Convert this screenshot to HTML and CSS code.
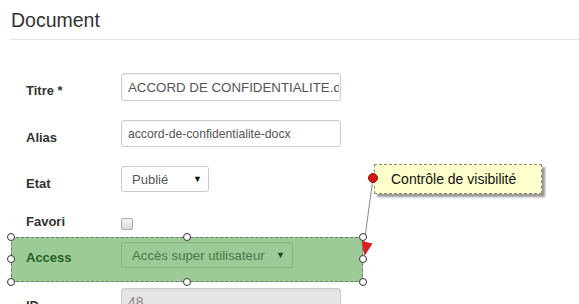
FILE: index.html
```html
<!DOCTYPE html>
<html lang="fr">
<head>
<meta charset="utf-8">
<title>Document</title>
<link rel="stylesheet" href="styles.css">
</head>
<body>
<header class="page-header"><h2>Document</h2></header>
<form class="form">
  <div class="row r-titre">
    <label class="label">Titre *</label>
    <input class="input" type="text" value="ACCORD DE CONFIDENTIALITE.docx">
  </div>
  <div class="row r-alias">
    <label class="label">Alias</label>
    <input class="input" type="text" value="accord-de-confidentialite-docx">
  </div>
  <div class="row r-etat">
    <label class="label">Etat</label>
    <div class="select select-etat"><span>Publié</span><span class="caret">▼</span></div>
  </div>
  <div class="row r-favori">
    <label class="label">Favori</label>
    <span class="checkbox"></span>
  </div>
  <div class="row r-access">
    <label class="label">Access</label>
    <div class="select select-access"><span>Accès super utilisateur</span><span class="caret">▼</span></div>
    <span class="handle h-tl"></span><span class="handle h-tm"></span><span class="handle h-tr"></span>
    <span class="handle h-ml"></span><span class="handle h-mr"></span>
    <span class="handle h-bl"></span><span class="handle h-bm"></span><span class="handle h-br"></span>
  </div>
  <div class="row r-id">
    <label class="label">ID</label>
    <input class="input input-ro" type="text" value="48" readonly>
  </div>
</form>
<div class="tooltip">Contrôle de visibilité</div>
<svg class="connector" width="579" height="304" viewBox="0 0 579 304">
  <line x1="373" y1="178" x2="363" y2="252" stroke="#8a8a8a" stroke-width="1"/>
  <polygon points="361.5,241 372.5,243.5 364.5,256" fill="#d91e1e"/>
  <circle cx="373" cy="178" r="4.5" fill="#d01515" stroke="#a50e0e" stroke-width="1"/>
</svg>
</body>
</html>
```
FILE: styles.css
```css
html, body {
  margin: 0;
  padding: 0;
  background: #fff;
}
body {
  position: relative;
  width: 579px;
  height: 304px;
  overflow: hidden;
  font-family: "Liberation Sans", Arial, sans-serif;
  color: #333;
}
.page-header {
  margin: 0 0 0 10px;
  padding: 9px 0 8px 1px;
  border-bottom: 1px solid #e5e5e5;
}
.page-header h2 {
  margin: 0;
  font-size: 19.5px;
  line-height: 22px;
  font-weight: normal;
  color: #333;
}
.form {
  margin: 0;
  padding-top: 33px;
}
.row {
  display: flex;
  align-items: flex-start;
  margin-left: 11px;
  padding-left: 15px;
  width: 352px;
  box-sizing: border-box;
}
.label {
  width: 95px;
  flex: none;
  font-size: 13px;
  line-height: 18px;
  font-weight: bold;
  padding-top: 9px;
  color: #333;
}
.input {
  box-sizing: border-box;
  width: 220px;
  height: 28px;
  margin: 0;
  padding: 0 1px 0 6px;
  border: 1px solid #ccc;
  border-radius: 3px;
  font-family: "Liberation Sans", Arial, sans-serif;
  font-size: 13px;
  color: #555;
  background: #fff;
  box-shadow: inset 0 1px 1px rgba(0,0,0,0.05);
  outline: none;
}
.r-titre .input { font-size: 13.3px; }
.r-alias { margin-top: 19px; }
.r-alias .input { height: 27px; font-size: 12.2px; }
.r-etat { margin-top: 19px; }
.select {
  box-sizing: border-box;
  display: flex;
  align-items: center;
  justify-content: space-between;
  height: 26px;
  border-radius: 3px;
  font-size: 13px;
}
.caret {
  font-size: 9px;
  line-height: 9px;
}
.select-etat {
  width: 88px;
  padding: 0 6px 0 10px;
  border: 1px solid #ccc;
  color: #555;
  background: #fff;
}
.select-etat .caret { color: #111; }
.r-favori { margin-top: 11px; height: 27px; }
.checkbox {
  box-sizing: border-box;
  width: 12px;
  height: 12px;
  margin-top: 14px;
  border: 1px solid #a8a8a8;
  border-radius: 2px;
  background: linear-gradient(#f4f4f4, #dcdcdc);
}
.r-access {
  position: relative;
  margin-top: 6px;
  height: 45px;
  padding: 4px 0 0 14px;
  background: #9ccb98;
  border: 1px dashed #6f7a6f;
}
.r-access .label {
  padding-top: 7px;
  color: #235e22;
}
.select-access {
  width: 172px;
  padding: 0 7px 0 10px;
  border: 1px solid #86b783;
  color: #477744;
  font-size: 13.2px;
}
.select-access .caret { color: #1d4a1c; }
.r-id { margin-top: 6px; }
.r-id .label { padding-top: 9px; }
.input-ro {
  background: #e6e6e6;
  color: #888;
  font-size: 14px;
}
.handle {
  position: absolute;
  box-sizing: border-box;
  width: 8px;
  height: 8px;
  border: 1px solid #333;
  border-radius: 50%;
  background: #fff;
  z-index: 3;
}
.h-tl { left: -5px; top: -5px; }
.h-tm { left: 171px; top: -5px; }
.h-tr { right: -5px; top: -5px; }
.h-ml { left: -5px; top: 17px; }
.h-mr { right: -5px; top: 17px; }
.h-bl { left: -5px; bottom: -5px; }
.h-bm { left: 171px; bottom: -5px; }
.h-br { right: -5px; bottom: -5px; }
.tooltip {
  position: absolute;
  left: 374px;
  top: 164px;
  width: 168px;
  height: 30px;
  box-sizing: border-box;
  padding-left: 16px;
  background: #ffffcc;
  border: 1px dashed #8c8c7a;
  box-shadow: 3px 3px 2px #9a9a9a;
  font-size: 14px;
  line-height: 28px;
  color: #111;
}
.connector {
  position: absolute;
  left: 0;
  top: 0;
  z-index: 2;
  pointer-events: none;
}
```
